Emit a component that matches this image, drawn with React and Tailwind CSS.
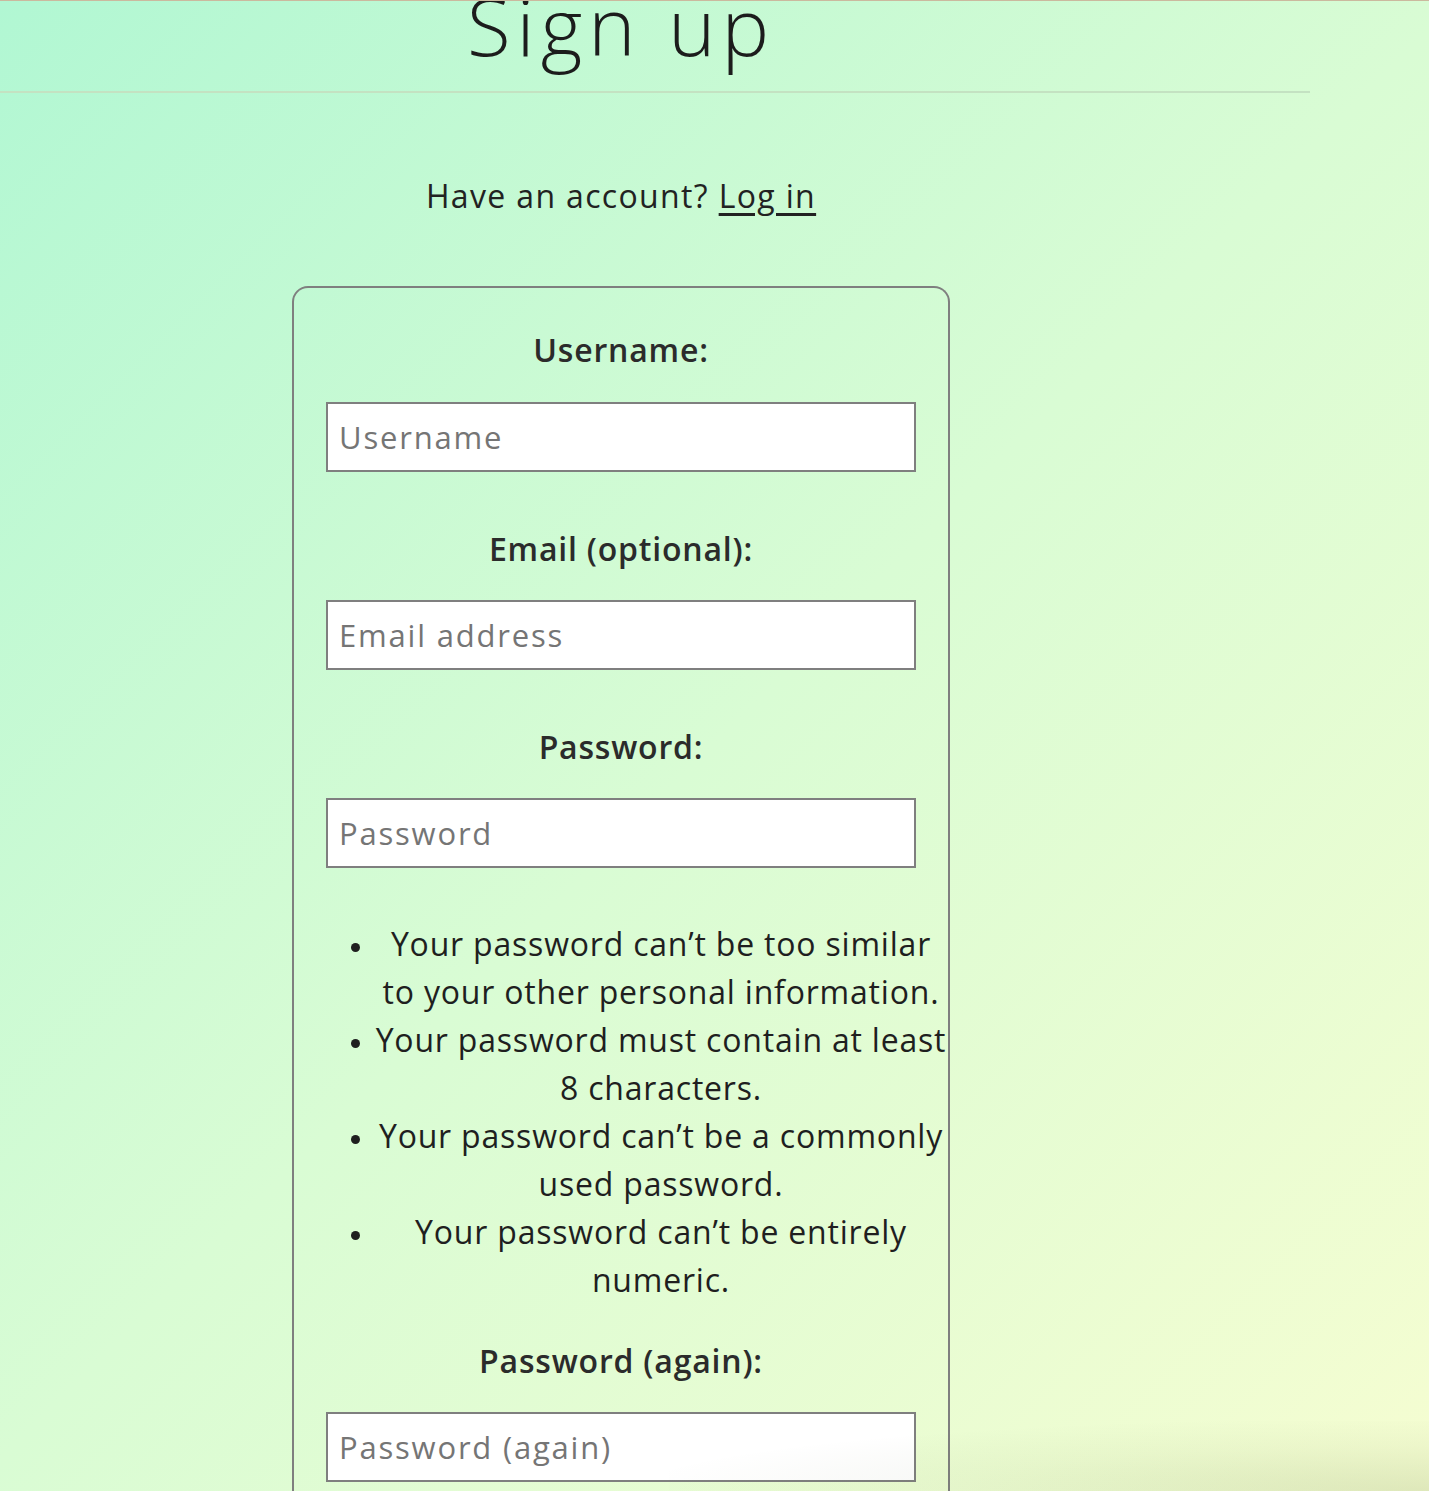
export default function App() {
  const rules = [
    ['Your password can’t be too similar', 'to your other personal information.'],
    ['Your password must contain at least', '8 characters.'],
    ['Your password can’t be a commonly', 'used password.'],
    ['Your password can’t be entirely', 'numeric.'],
  ];

  const labelCls = 'text-[32px] font-[560] leading-[48px] tracking-[0.8px] text-[#2b2b2b]';
  const inputCls =
    'h-[70px] w-full border-2 border-[#7f7f7f] bg-white px-[11px] text-[31px] tracking-[1.8px] outline-none placeholder:text-[#757575]';

  return (
    <div className="relative h-[1491px] overflow-hidden border-t border-[#cbb99e] bg-[linear-gradient(135deg,#b1f7d3_0%,#d9fcd4_50%,#f5fdd1_100%)] font-['Open_Sans',sans-serif] text-[#222]">
      <div className="w-[1310px]">
        <div className="w-[1242px] text-center">
          <h1 className="-mt-[16px] h-[74px] text-[80px] font-light leading-none tracking-[6px] text-[#1c1c1c]">Sign up</h1>
        </div>
        <div className="mt-[32px] h-[2px] bg-[#c4e2c2]" />

        <div className="flex w-[1242px] flex-col items-center">
          <p className="mt-[79px] text-[32px] leading-[48px] tracking-[1.35px]">
            Have an account? <a href="#" className="underline underline-offset-[5px]">Log in</a>
          </p>

          <form className="mt-[66px] flex w-[658px] flex-col items-center rounded-t-[16px] border-2 border-b-0 border-[#7f7f7f] px-[32px] pt-[38px] pb-[60px]">
            <label className={labelCls}>Username:</label>
            <input className={`mt-[28px] ${inputCls}`} placeholder="Username" />

            <label className={`mt-[53px] ${labelCls}`}>Email (optional):</label>
            <input className={`mt-[27px] ${inputCls}`} placeholder="Email address" />

            <label className={`mt-[53px] ${labelCls}`}>Password:</label>
            <input type="password" className={`mt-[27px] ${inputCls}`} placeholder="Password" />

            <ul className="mt-[52px] ml-[49px] w-[572px] self-start list-disc text-center text-[32px] leading-[48px] tracking-[0.8px] text-[#1f1f1f] marker:text-[24px]">
              {rules.map(([a, b]) => (
                <li key={a} className="whitespace-nowrap">
                  {a}
                  <br />
                  {b}
                </li>
              ))}
            </ul>

            <label className={`mt-[33px] ${labelCls}`}>Password (again):</label>
            <input type="password" className={`mt-[27px] ${inputCls}`} placeholder="Password (again)" />
          </form>
        </div>
      </div>

      <div className="pointer-events-none absolute bottom-0 right-0 h-[70px] w-[760px] bg-[radial-gradient(ellipse_at_bottom_right,rgba(60,80,20,0.12),rgba(60,80,20,0.04)_45%,transparent_75%)]" />
    </div>
  );
}
